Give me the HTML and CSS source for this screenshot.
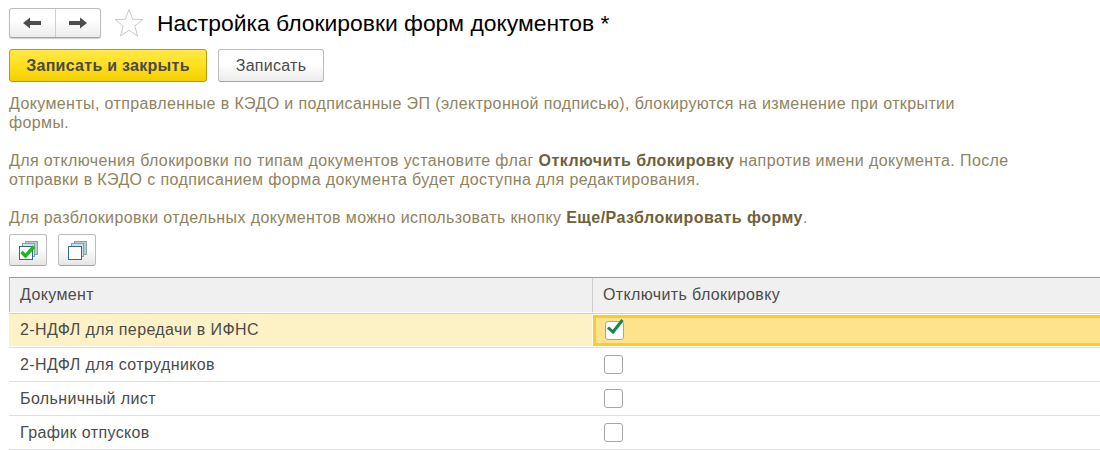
FILE: index.html
```html
<!DOCTYPE html>
<html lang="ru">
<head>
<meta charset="utf-8">
<title>Настройка блокировки форм документов</title>
<link rel="stylesheet" href="styles.css">
</head>
<body>
<header class="head">
  <div class="nav">
    <button class="nav-btn" aria-label="Назад"><svg width="18" height="12" viewBox="0 0 18 12"><path d="M0 6 L7 0.5 V4 H18 V8 H7 V11.5 Z" fill="#4d4d4d"/></svg></button>
    <button class="nav-btn" aria-label="Вперёд"><svg width="18" height="12" viewBox="0 0 18 12"><path d="M18 6 L11 0.5 V4 H0 V8 H11 V11.5 Z" fill="#4d4d4d"/></svg></button>
  </div>
  <svg class="star" width="30" height="30" viewBox="0 0 30 30"><path d="M15 1.5 L18.6 11.2 L28.8 11.6 L20.8 18 L23.6 28 L15 22.3 L6.4 28 L9.2 18 L1.2 11.6 L11.4 11.2 Z" fill="#fff" stroke="#c9c9c9" stroke-width="1"/></svg>
  <h1 class="title">Настройка блокировки форм документов *</h1>
</header>
<div class="actions">
  <button class="btn btn-primary">Записать и закрыть</button>
  <button class="btn btn-plain">Записать</button>
</div>
<div class="info">
  <p>Документы, отправленные в КЭДО и подписанные ЭП (электронной подписью), блокируются на изменение при открытии формы.</p>
  <p>Для отключения блокировки по типам документов установите флаг <b>Отключить блокировку</b> напротив имени документа. После отправки в КЭДО с подписанием форма документа будет доступна для редактирования.</p>
  <p>Для разблокировки отдельных документов можно использовать кнопку <b>Еще/Разблокировать форму</b>.</p>
</div>
<div class="tools">
  <button class="tool" aria-label="Установить все">
    <svg width="19" height="19" viewBox="0 0 19 19">
      <rect x="6.5" y="0.5" width="12" height="13" fill="#b9ccd0" stroke="#8aa3a8"/>
      <rect x="3.5" y="2.5" width="12" height="13" fill="#d3e0e3" stroke="#8aa3a8"/>
      <rect x="0.5" y="5.5" width="13" height="13" fill="#fff" stroke="#2f6a96"/>
      <path d="M2.5 11 L6.5 15 L15 5.5" fill="none" stroke="#22b322" stroke-width="3.4"/>
    </svg>
  </button>
  <button class="tool" aria-label="Снять все">
    <svg width="19" height="19" viewBox="0 0 19 19">
      <rect x="6.5" y="0.5" width="12" height="13" fill="#b9ccd0" stroke="#8aa3a8"/>
      <rect x="3.5" y="2.5" width="12" height="13" fill="#d3e0e3" stroke="#8aa3a8"/>
      <rect x="0.5" y="5.5" width="13" height="13" fill="#fff" stroke="#2f6a96"/>
    </svg>
  </button>
</div>
<div class="grid">
  <div class="row row-head">
    <div class="cell c1">Документ</div>
    <div class="cell c2">Отключить блокировку</div>
  </div>
  <div class="row row-active">
    <div class="cell c1">2-НДФЛ для передачи в ИФНС</div>
    <div class="cell c2 focus"><span class="check">
      <svg class="tick" width="20" height="18" viewBox="0 0 20 18"><path d="M2 9.5 L7 14 L16.5 2" fill="none" stroke="#0f8a45" stroke-width="3"/></svg>
    </span></div>
  </div>
  <div class="row">
    <div class="cell c1">2-НДФЛ для сотрудников</div>
    <div class="cell c2"><span class="check"></span></div>
  </div>
  <div class="row">
    <div class="cell c1">Больничный лист</div>
    <div class="cell c2"><span class="check"></span></div>
  </div>
  <div class="row">
    <div class="cell c1">График отпусков</div>
    <div class="cell c2"><span class="check"></span></div>
  </div>
</div>
</body>
</html>
```
FILE: styles.css
```css
* { box-sizing: border-box; }
html, body { margin: 0; padding: 0; }
body {
  width: 1100px;
  height: 450px;
  overflow: hidden;
  background: #fff;
  font-family: "Liberation Sans", Arial, sans-serif;
  font-size: 16px;
  letter-spacing: 0.38px;
  color: #4b4b4b;
  padding: 8px 0 0 9px;
}
button { font-family: inherit; letter-spacing: 0.28px; padding: 0; cursor: default; }
.head { display: flex; align-items: center; height: 30px; }
.nav {
  display: flex;
  width: 92px;
  height: 30px;
  border: 1px solid #bdbdbd;
  border-bottom-color: #a3a3a3;
  border-radius: 3px;
  background: linear-gradient(#fff 40%, #ececec);
  box-shadow: 0 1px 1px #ccc;
}
.nav-btn {
  flex: 1;
  border: 0;
  background: transparent;
  display: flex;
  align-items: center;
  justify-content: center;
}
.nav-btn + .nav-btn { border-left: 1px solid #cfcfcf; }
.star { margin-left: 13px; }
.title {
  margin: 0 0 0 13px;
  font-size: 22.9px;
  letter-spacing: 0;
  font-weight: 400;
  color: #000;
}
.actions { display: flex; gap: 11px; margin-top: 11px; height: 33px; }
.btn { height: 33px; border-radius: 3px; font-size: 16px; }
.btn-primary {
  width: 198px;
  border: 1px solid #b39a10;
  background: linear-gradient(#ffe94a, #ffdf1e 50%, #f2d000);
  font-weight: 700;
  color: #4a4a4a;
}
.btn-plain {
  width: 106px;
  border: 1px solid #bdbdbd;
  border-bottom-color: #a3a3a3;
  background: linear-gradient(#fff 45%, #ececec);
  color: #4b4b4b;
}
.info { margin-top: 12px; width: 1010px; color: #8f8360; line-height: 19px; }
.info p { margin: 0 0 19px; }
.info p:first-child { width: 960px; }
.info p:last-child { margin-bottom: 0; }
.info b { color: #6f6138; letter-spacing: 0.47px; }
.tools { display: flex; gap: 11px; margin-top: 7px; }
.tool {
  width: 38px;
  height: 32px;
  border: 1px solid #bdbdbd;
  border-bottom-color: #a3a3a3;
  border-radius: 3px;
  background: linear-gradient(#fff 40%, #e6e6e6);
  display: flex;
  align-items: center;
  justify-content: center;
}
.grid {
  margin-top: 11px;
  border-top: 1px solid #9c9c9c;
}
.row { display: flex; height: 34px; border-bottom: 1px solid #e0e0e0; }
.row-head { height: 36px; border-bottom-color: #cfcfcf; }
.cell { display: flex; align-items: center; padding-left: 10px; }
.c1 { width: 583px; padding-left: 11px; }
.c2 { flex: 1; border-left: 1px solid #fff; }
.row-head .cell { background: #f0f0f0; margin-bottom: 1px; }
.row-head .c1 { border-left: 1px solid #b5b5b5; padding-left: 10px; }
.row-head .c2 { border-left-color: #cfcfcf; }
.row-active .c1 { background: #fdf2c5; margin-bottom: 1px; }
.row .focus {
  background: #fee38c;
  border: 3px solid #fdcb2a;
  border-right: 0;
  margin: 1px 0 1px 1px;
  padding-left: 8px;
}
.check {
  position: relative;
  display: block;
  width: 19px;
  height: 19px;
  margin-left: 1px;
  background: #fff;
  border: 1px solid #a6a6a6;
  border-radius: 3px;
}
.tick { position: absolute; left: 0; top: -4px; }
```
